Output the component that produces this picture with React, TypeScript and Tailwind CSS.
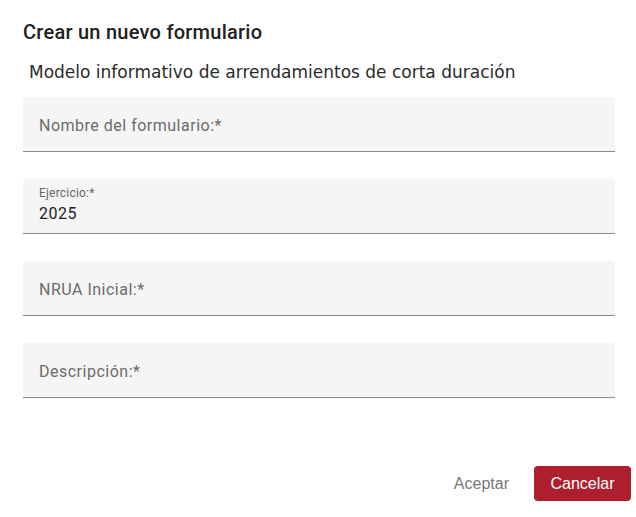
const roboto = { fontFamily: "Roboto, 'Liberation Sans', sans-serif" };

function Field({ label, value }: { label: string; value?: string }) {
  return (
    <div className="h-[55px] rounded-t-[4px] bg-[#f5f5f5] border-b border-[#8c8c8c] px-4">
      {value ? (
        <div className="pt-[7px]">
          <div className="text-[12px] leading-[14px] tracking-[0.2px] text-[#666666]">{label}</div>
          <div className="mt-1 text-[16px] leading-[20px] tracking-[0.5px] text-[#212121]">{value}</div>
        </div>
      ) : (
        <div className="pt-[19px] text-[16px] leading-[20px] tracking-[0.5px] text-[#6b6b6b]">{label}</div>
      )}
    </div>
  );
}

export default function App() {
  return (
    <div className="w-[636px] h-[517px] bg-white pl-[23px] pr-[21px] pt-5" style={roboto}>
      <h2 className="text-[20px] leading-6 tracking-[0.25px] font-medium text-[#212121]">
        Crear un nuevo formulario
      </h2>
      <p
        className="mt-4 ml-[6px] text-[17px] leading-6 text-[#2a2a2a]"
        style={{ fontFamily: "'DejaVu Sans', Verdana, sans-serif" }}
      >
        Modelo informativo de arrendamientos de corta duración
      </p>
      <div className="mt-[13px] flex flex-col gap-[27px]">
        <Field label="Nombre del formulario:*" />
        <Field label="Ejercicio:*" value="2025" />
        <Field label="NRUA Inicial:*" />
        <Field label="Descripción:*" />
      </div>
      <div
        className="mt-[68px] flex items-center justify-end gap-[25px] -mr-[16px]"
        style={{ fontFamily: "'Liberation Sans', Arial, sans-serif" }}
      >
        <button className="text-[16px] text-[#777777]">Aceptar</button>
        <button className="h-[35px] w-[97px] rounded-[4px] bg-[#ad1f2f] text-white text-[16px]">Cancelar</button>
      </div>
    </div>
  );
}
